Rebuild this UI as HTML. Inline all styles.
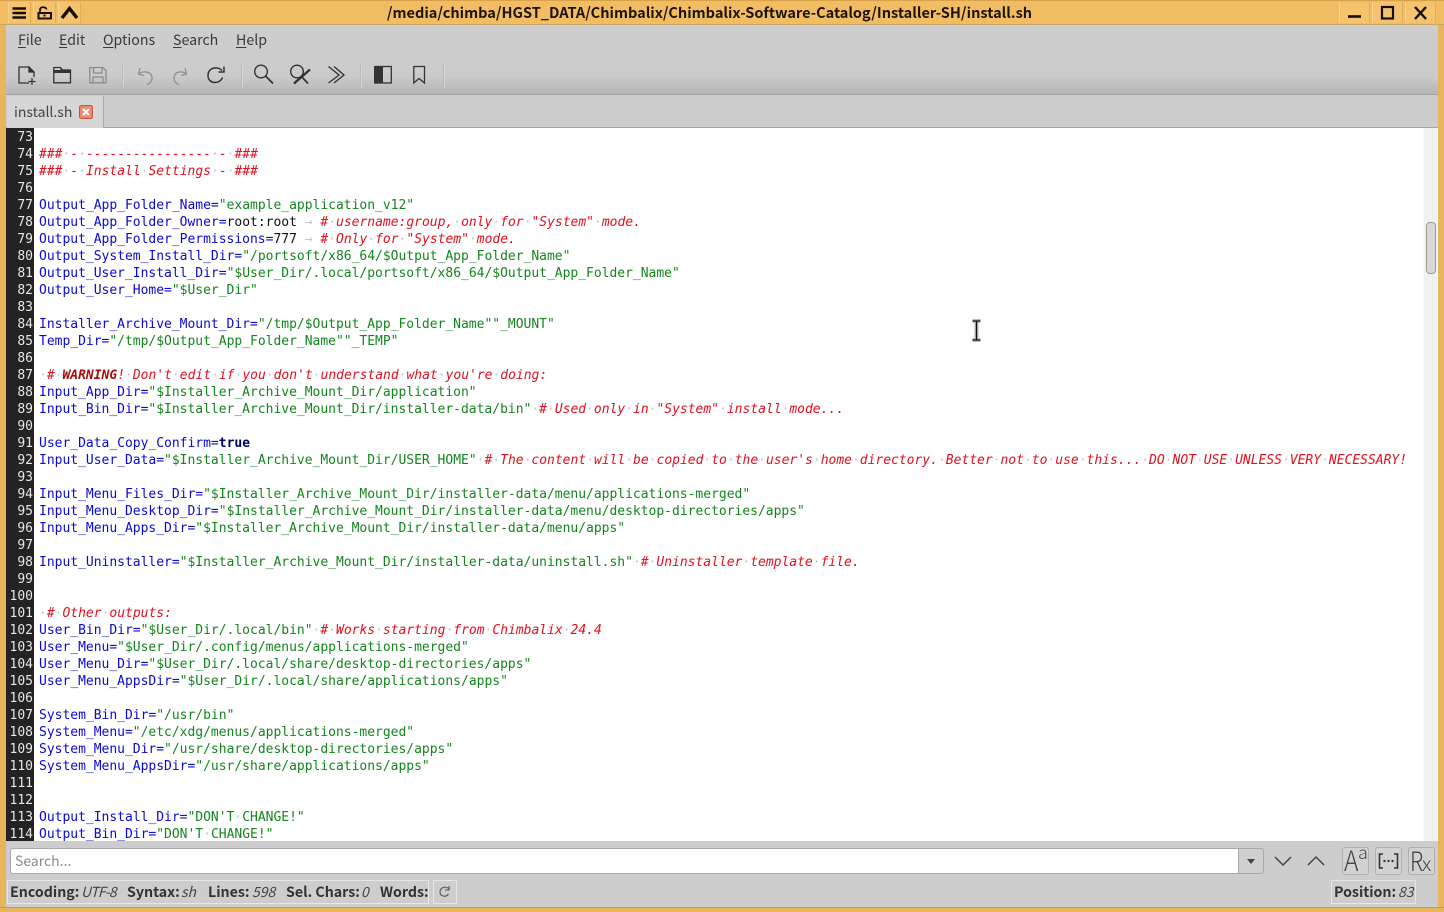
<!DOCTYPE html>
<html><head><meta charset="utf-8"><style>
html,body{margin:0;padding:0;width:1444px;height:912px;overflow:hidden;background:#cdcdcd;font-family:"Noto Sans CJK JP","Liberation Sans",sans-serif}
.a{position:absolute}
#tb{left:0;top:0;width:1444px;height:25px;background:#f2bd62;border-top:1px solid #d6a24a;box-sizing:border-box;border-bottom:1px solid #c9a468}
#title{left:0;top:3px;width:1419px;text-align:center;font-size:14.55px;font-weight:700;color:#1c1408;line-height:20px}
.wb{top:2px;height:21px;background:#f5c36e;border-right:1px solid #e0ad58;border-left:1px solid #f8d391;box-sizing:border-box}
.m{top:30px;font-size:14.2px;color:#3a3a3a;line-height:20px}
.m u{text-decoration:underline;text-underline-offset:2px}
#tool{left:6px;top:57px;width:1432px;height:38px;background:linear-gradient(#cdcdcd 0%,#cbcbcb 50%,#b6b6b6 100%);border-bottom:1px solid #a3a3a3;box-sizing:border-box}
.sep{top:64px;width:1px;height:24px;background:#bcbcbc;border-right:1px solid #d5d5d5}
#tab{left:7px;top:96px;width:97px;height:32px;background:#d6d6d6;border-right:1px solid #a9a9a9;box-sizing:border-box}
#ed{left:6px;top:128px;width:1432px;height:713px;background:#fff;overflow:hidden}
#gut{left:0;top:0;width:28px;height:713px;background:#232323;color:#e6e6e6;text-align:right}
pre{margin:0;font:13px/17px "DejaVu Sans Mono",monospace;position:absolute;letter-spacing:-.012px}
#code{left:33px;top:1px;color:#111;white-space:pre}
.v{color:#0a0ad2}.s{color:#14851e}.k{color:#000066;font-weight:700}
.c{color:#e2101e;font-style:italic}.w{color:#a50d0d;font-weight:700;font-style:italic}
pre i{color:#c4c4c4;font-style:normal;font-weight:400}
.t{color:#c6c6c6;font-style:normal}
.sb{font-size:14.2px;color:#333;line-height:20px;top:882px;white-space:pre;font-weight:700}
.si{font-size:14px;color:#444;line-height:20px;top:882px;white-space:pre;font-style:italic}
.btn{top:847px;width:27px;height:28px;background:#d2d2d2;border:1px solid #b0b0b0;border-radius:3px;box-sizing:border-box}
svg{position:absolute;overflow:visible}
</style></head><body>

<div class="a" style="left:0;top:0;width:6px;height:912px;background:#e9b55c"></div>
<div class="a" style="left:1438px;top:0;width:6px;height:912px;background:#e9b55c"></div>
<div class="a" style="left:0;top:907px;width:1444px;height:5px;background:#e9b55c;border-top:1px solid #bb9a60;box-sizing:border-box"></div>

<div class="a" id="tb"></div>
<div class="a wb" style="left:8px;width:23px"></div>
<div class="a wb" style="left:33px;width:23px"></div>
<div class="a wb" style="left:58px;width:23px"></div>
<div class="a wb" style="left:1339px;width:31px"></div>
<div class="a wb" style="left:1372px;width:31px"></div>
<div class="a wb" style="left:1405px;width:31px"></div>
<div class="a" id="title">/media/chimba/HGST_DATA/Chimbalix/Chimbalix-Software-Catalog/Installer-SH/install.sh</div>

<svg style="left:0;top:0" width="100" height="25" fill="none" stroke="#140e04">
<path d="M12.5 8.5H26M12.5 13H26M12.5 17.5H26" stroke-width="2.6"/>
<path d="M40 12V9.500C40 6.500 46.500 6.500 46.500 9.500" stroke-width="1.800"/>
<path d="M38.500 13H51V18.500H38.500Z" stroke-width="2"/>
<rect x="43.500" y="14.500" width="2" height="2" fill="#140e04" stroke="none"/>
<path d="M62 18L69.5 8.500L77 18" stroke-width="3.400"/>
</svg>
<svg style="left:1340px;top:0" width="100" height="25" fill="none" stroke="#140e04">
<path d="M8 16.5H21" stroke-width="2.6"/>
<rect x="42" y="7" width="11" height="11.5" stroke-width="2.2"/>
<path d="M75 7L86 19M86 7L75 19" stroke-width="2.4"/>
</svg>

<div class="a m" style="left:18px"><u>F</u>ile</div>
<div class="a m" style="left:59px"><u>E</u>dit</div>
<div class="a m" style="left:103px"><u>O</u>ptions</div>
<div class="a m" style="left:173px"><u>S</u>earch</div>
<div class="a m" style="left:236px"><u>H</u>elp</div>

<div class="a" id="tool"></div>
<div class="a sep" style="left:122px"></div>
<div class="a sep" style="left:241px"></div>
<div class="a sep" style="left:360px"></div>
<div class="a sep" style="left:443px"></div>

<svg style="left:0;top:57px" width="450" height="38" fill="none" stroke="#333" stroke-width="1.300">
<path d="M29 26H19V10H29L34 15V20M29 10V15H34"/>
<path d="M29 10L34 15H29Z" fill="#333" stroke-width="1"/>
<path d="M32 21V28M28.500 24.500H35.500" stroke-width="1.200"/>
<path d="M53.800 10.500H60.500L62.500 13H70.500V25.800H53.800Z"/>
<path d="M60.500 10.500L62.500 13H70.500V16H53.800V13H60.500Z" fill="#333" stroke="none"/>
<g stroke="#8b8b8b">
<path d="M89.800 10.500H103L106 13.500V25.800H89.800Z"/>
<path d="M93.500 10.800V16H102V10.800M93 25.500V20H103V25.500"/>
</g>
<g stroke="#8f8f8f">
<path d="M140 11L138.500 17L144 18.500"/>
<path d="M139 17C142 13.500 152 14 152 21C152 24.500 150 26.500 147 27.500"/>
<path d="M185 11L186.500 17L181 18.500"/>
<path d="M186 17C183 13.500 174 14 174 21C174 24.500 176 26.500 179 27.500"/>
</g>
<path d="M222 13.500C219 9.500 208 9.500 208 18.500C208 27.500 220 27.500 222.500 20.500" stroke-width="1.500"/>
<path d="M224 9.500V15H218.500" stroke-width="1.500"/>
<circle cx="261" cy="14.500" r="6.300" stroke-width="1.400"/>
<path d="M265.500 19L273 26.500" stroke-width="1.700"/>
<circle cx="297" cy="14.500" r="6.300" stroke-width="1.400"/>
<path d="M301 19L308 26.500" stroke-width="1.700"/>
<path d="M294 26.500L310 12.500" stroke-width="2.400"/>
<path d="M328.500 9.500L339 18L328.500 26M334 9.500L344 18L334 26" stroke-width="1.300"/>
<rect x="374.800" y="9.500" width="16.500" height="16.500"/>
<rect x="374" y="9" width="9" height="17" fill="#333" stroke="none"/>
<path d="M413.800 9.500H424.500V26L419 21.500L413.800 26Z"/>
</svg>

<div class="a" style="left:6px;top:127px;width:1432px;height:1px;background:#a3a3a3"></div>
<div class="a" id="tab"></div>
<div class="a" style="left:14px;top:102px;font-size:14px;line-height:20px;color:#444">install.sh</div>
<svg style="left:79px;top:105px" width="14" height="14">
<rect x=".5" y=".5" width="13" height="13" rx="2" fill="#ec8a6f" stroke="#cf4f3a"/>
<path d="M4 4L10 10M10 4L4 10" stroke="#fff" stroke-width="2.200"/>
</svg>

<div class="a" id="ed">
<div class="a" id="gut"><pre style="right:1px;top:1px;text-align:right">73
74
75
76
77
78
79
80
81
82
83
84
85
86
87
88
89
90
91
92
93
94
95
96
97
98
99
100
101
102
103
104
105
106
107
108
109
110
111
112
113
114</pre></div>
<pre id="code">

<span class="c">###<i>·</i>-<i>·</i>----------------<i>·</i>-<i>·</i>###</span>
<span class="c">###<i>·</i>-<i>·</i>Install<i>·</i>Settings<i>·</i>-<i>·</i>###</span>

<span class="v">Output_App_Folder_Name=</span><span class="s">"example_application_v12"</span>
<span class="v">Output_App_Folder_Owner=</span>root:root<span class="t"> → </span><span class="c">#<i>·</i>username:group,<i>·</i>only<i>·</i>for<i>·</i>"System"<i>·</i>mode.</span>
<span class="v">Output_App_Folder_Permissions=</span>777<span class="t"> → </span><span class="c">#<i>·</i>Only<i>·</i>for<i>·</i>"System"<i>·</i>mode.</span>
<span class="v">Output_System_Install_Dir=</span><span class="s">"/portsoft/x86_64/$Output_App_Folder_Name"</span>
<span class="v">Output_User_Install_Dir=</span><span class="s">"$User_Dir/.local/portsoft/x86_64/$Output_App_Folder_Name"</span>
<span class="v">Output_User_Home=</span><span class="s">"$User_Dir"</span>

<span class="v">Installer_Archive_Mount_Dir=</span><span class="s">"/tmp/$Output_App_Folder_Name""_MOUNT"</span>
<span class="v">Temp_Dir=</span><span class="s">"/tmp/$Output_App_Folder_Name""_TEMP"</span>

<i>·</i><span class="c">#<i>·</i><span class="w">WARNING</span>!<i>·</i>Don't<i>·</i>edit<i>·</i>if<i>·</i>you<i>·</i>don't<i>·</i>understand<i>·</i>what<i>·</i>you're<i>·</i>doing:</span>
<span class="v">Input_App_Dir=</span><span class="s">"$Installer_Archive_Mount_Dir/application"</span>
<span class="v">Input_Bin_Dir=</span><span class="s">"$Installer_Archive_Mount_Dir/installer-data/bin"</span><i>·</i><span class="c">#<i>·</i>Used<i>·</i>only<i>·</i>in<i>·</i>"System"<i>·</i>install<i>·</i>mode...</span>

<span class="v">User_Data_Copy_Confirm=</span><span class="k">true</span>
<span class="v">Input_User_Data=</span><span class="s">"$Installer_Archive_Mount_Dir/USER_HOME"</span><i>·</i><span class="c">#<i>·</i>The<i>·</i>content<i>·</i>will<i>·</i>be<i>·</i>copied<i>·</i>to<i>·</i>the<i>·</i>user's<i>·</i>home<i>·</i>directory.<i>·</i>Better<i>·</i>not<i>·</i>to<i>·</i>use<i>·</i>this...<i>·</i>DO<i>·</i>NOT<i>·</i>USE<i>·</i>UNLESS<i>·</i>VERY<i>·</i>NECESSARY!</span>

<span class="v">Input_Menu_Files_Dir=</span><span class="s">"$Installer_Archive_Mount_Dir/installer-data/menu/applications-merged"</span>
<span class="v">Input_Menu_Desktop_Dir=</span><span class="s">"$Installer_Archive_Mount_Dir/installer-data/menu/desktop-directories/apps"</span>
<span class="v">Input_Menu_Apps_Dir=</span><span class="s">"$Installer_Archive_Mount_Dir/installer-data/menu/apps"</span>

<span class="v">Input_Uninstaller=</span><span class="s">"$Installer_Archive_Mount_Dir/installer-data/uninstall.sh"</span><i>·</i><span class="c">#<i>·</i>Uninstaller<i>·</i>template<i>·</i>file.</span>


<i>·</i><span class="c">#<i>·</i>Other<i>·</i>outputs:</span>
<span class="v">User_Bin_Dir=</span><span class="s">"$User_Dir/.local/bin"</span><i>·</i><span class="c">#<i>·</i>Works<i>·</i>starting<i>·</i>from<i>·</i>Chimbalix<i>·</i>24.4</span>
<span class="v">User_Menu=</span><span class="s">"$User_Dir/.config/menus/applications-merged"</span>
<span class="v">User_Menu_Dir=</span><span class="s">"$User_Dir/.local/share/desktop-directories/apps"</span>
<span class="v">User_Menu_AppsDir=</span><span class="s">"$User_Dir/.local/share/applications/apps"</span>

<span class="v">System_Bin_Dir=</span><span class="s">"/usr/bin"</span>
<span class="v">System_Menu=</span><span class="s">"/etc/xdg/menus/applications-merged"</span>
<span class="v">System_Menu_Dir=</span><span class="s">"/usr/share/desktop-directories/apps"</span>
<span class="v">System_Menu_AppsDir=</span><span class="s">"/usr/share/applications/apps"</span>


<span class="v">Output_Install_Dir=</span><span class="s">"DON'T<i>·</i>CHANGE!"</span>
<span class="v">Output_Bin_Dir=</span><span class="s">"DON'T<i>·</i>CHANGE!"</span></pre>
<div class="a" style="left:1417px;top:0;width:14px;height:713px;background:#f1f1f1;border-left:1px solid #f8f8f8;box-sizing:border-box"></div>
<div class="a" style="left:1420px;top:94px;width:8px;height:50px;background:#d9d7da;border:1px solid #999;border-radius:4px"></div>
</div>

<svg style="left:970px;top:319px" width="14" height="24" fill="none">
<path d="M2.500 2H10.500M6.500 2V21M2.500 21H10.500" stroke="#bbb" stroke-width="4"/>
<path d="M2.500 2H10.500M6.500 2V21M2.500 21H10.500" stroke="#111" stroke-width="1.300"/>
</svg>

<div class="a" style="left:10px;top:848px;width:1229px;height:26px;background:#fff;border:1px solid #a8a8a8;border-radius:3px 0 0 3px;box-sizing:border-box"></div>
<div class="a" style="left:15px;top:851px;font-size:14px;line-height:20px;color:#8a8a8a">Search...</div>
<div class="a" style="left:1238px;top:848px;width:26px;height:26px;background:#cfcfcf;border:1px solid #a8a8a8;border-radius:0 3px 3px 0;box-sizing:border-box"></div>
<svg style="left:1240px;top:848px" width="90" height="26" fill="none" stroke="#444" stroke-width="1.500">
<path d="M7 11H15L11 16Z" fill="#444" stroke="none"/>
<path d="M35 9L43 17L51 9M68 17L76 9L84 17"/>
</svg>
<div class="a btn" style="left:1342px"></div>
<div class="a btn" style="left:1375px"></div>
<div class="a btn" style="left:1408px"></div>
<div class="a" style="left:1344px;top:843px;font-size:28px;line-height:34px;color:#444;font-weight:300;transform:scaleX(.88);transform-origin:left">A</div>
<div class="a" style="left:1358px;top:840px;font-size:18px;line-height:24px;color:#444;font-weight:300">a</div>
<svg style="left:1375px;top:847px" width="27" height="28" fill="none" stroke="#333" stroke-width="1.600">
<path d="M8 7H4.500V21H8M19 7H22.500V21H19"/>
<path d="M8.500 14H10.500M12.500 14H14.500M16.500 14H18.500" stroke-width="2.200"/>
</svg>
<div class="a" style="left:1410px;top:843px;font-size:27px;line-height:34px;color:#444;font-weight:300;transform:scaleX(.8);transform-origin:left">R</div>
<div class="a" style="left:1422px;top:850px;font-size:20px;line-height:26px;color:#444;font-weight:300">x</div>

<div class="a" style="left:7px;top:880px;width:422px;height:24px;border:1px solid #e6e6e6;box-sizing:border-box"></div>
<div class="a" style="left:433px;top:880px;width:24px;height:24px;border:1px solid #e6e6e6;box-sizing:border-box"></div>
<div class="a" style="left:1331px;top:880px;width:85px;height:24px;border:1px solid #e6e6e6;box-sizing:border-box"></div>
<div class="a sb" style="left:10px">Encoding:</div><div class="a si" style="left:81px;letter-spacing:-.8px">UTF-8</div>
<div class="a sb" style="left:127px">Syntax:</div><div class="a si" style="left:181px">sh</div>
<div class="a sb" style="left:208px">Lines:</div><div class="a si" style="left:252px">598</div>
<div class="a sb" style="left:286px">Sel. Chars:</div><div class="a si" style="left:361px">0</div>
<div class="a sb" style="left:380px">Words:</div>
<div class="a sb" style="left:1334px">Position:</div><div class="a si" style="left:1398px">83</div>
<svg style="left:433px;top:880px" width="24" height="24" fill="none" stroke="#555" stroke-width="1.100">
<path d="M15.500 8.500C12 5.500 7 8 7 12C7 16 12.500 18 15.500 14"/>
<path d="M16 6V10H12"/>
</svg>
</body></html>
